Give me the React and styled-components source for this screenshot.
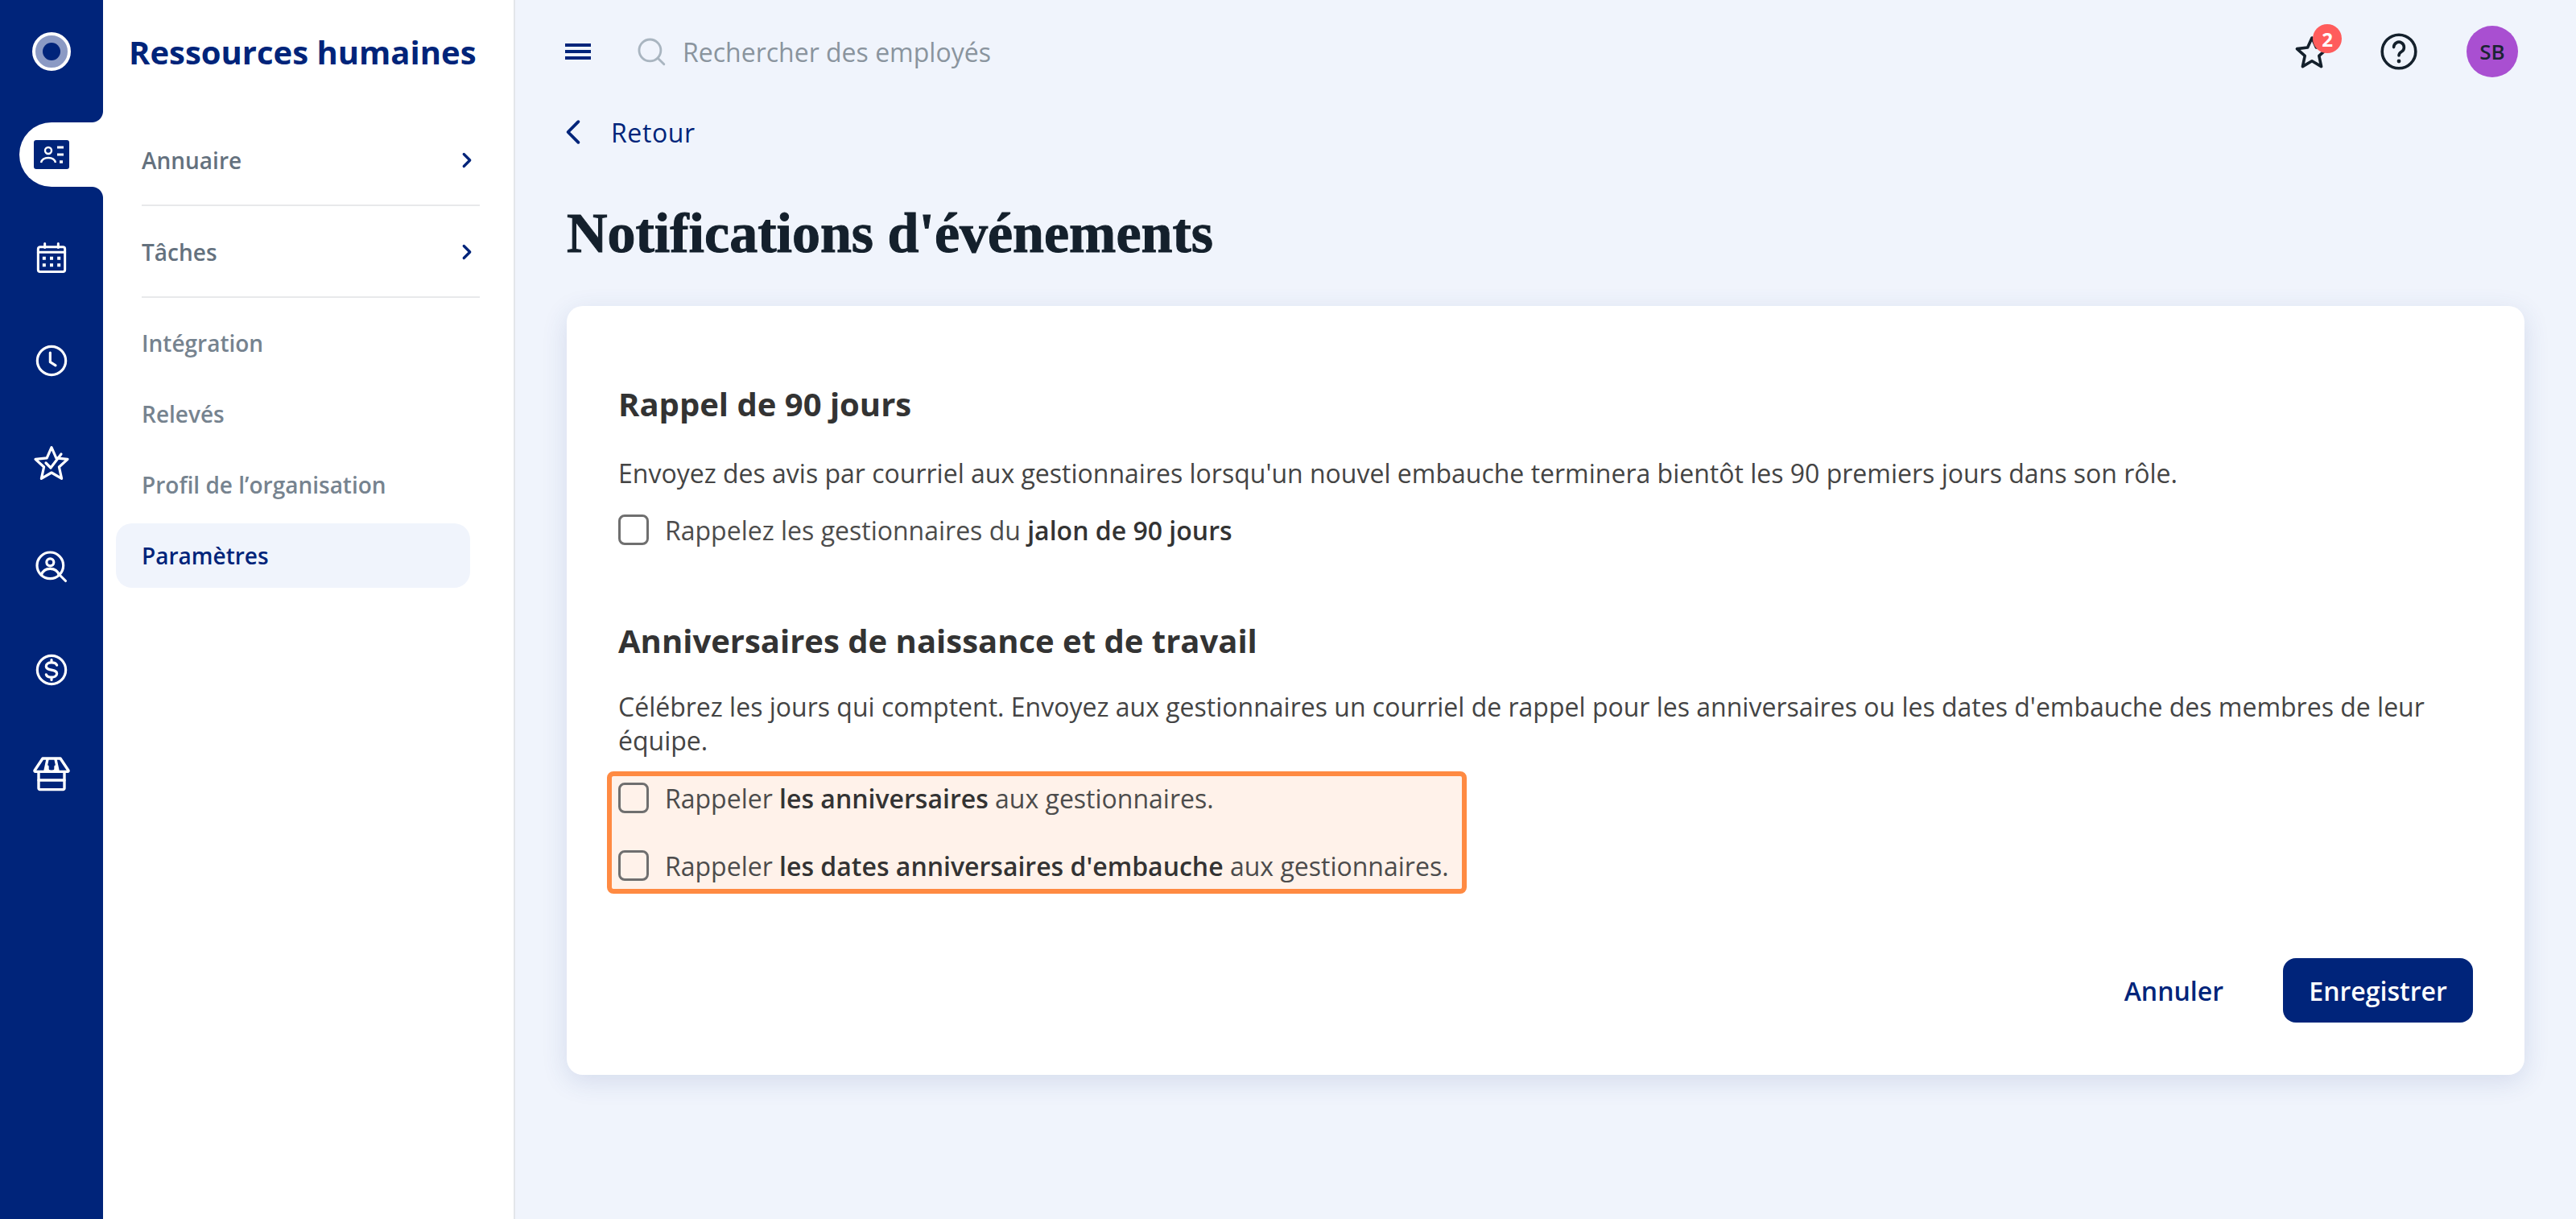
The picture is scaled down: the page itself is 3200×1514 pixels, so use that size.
import React from 'react'
import styled, { createGlobalStyle } from 'styled-components'

const NAVY = '#00247a'

const Global = createGlobalStyle`
  * { box-sizing: border-box; }
  html, body { margin: 0; padding: 0; background: #f0f4fc; }
  body { font-family: "Open Sans", "Noto Sans", sans-serif; color: #333; }
`

const Icon = ({ size = 40, height, box = '0 0 24 24', color = 'currentColor', sw = 2, children }) => (
  <svg width={size} height={height || size} viewBox={box} fill="none" stroke={color} strokeWidth={sw} strokeLinecap="round" strokeLinejoin="round">
    {children}
  </svg>
)

const railIcons = [
  <Icon key="cal" size={40} sw={1.8}>
    <rect x="2" y="4" width="20" height="18.5" rx="1.5" />
    <path d="M2 8h20M7 1.5v3M17 1.5v3" />
    <path d="M6.5 12.5h.01M12 12.5h.01M17.5 12.5h.01M6.5 17.5h.01M12 17.5h.01M17.5 17.5h.01" strokeWidth="2.4" strokeLinecap="square" />
  </Icon>,
  <Icon key="clock" size={40} sw={1.9}>
    <circle cx="12" cy="12" r="10.6" />
    <path d="M11 6v7l4 2.5" />
  </Icon>,
  <Icon key="star" size={48} sw={1.6}>
    <path d="M12 1.8l2.9 6.6 7.1.8-5.3 4.8 1.6 7.2-6.3-3.7-6.3 3.7 1.6-7.2L2 9.2l7.1-.8z" />
    <path d="M8.5 11.5l3 3 6.5-8.5" />
  </Icon>,
  <Icon key="person" size={40} sw={1.9}>
    <circle cx="11" cy="11" r="9.8" />
    <circle cx="11" cy="8.6" r="2.7" />
    <path d="M4.5 18c1-3.4 3.5-4.6 6.5-4.6s5.5 1.2 6.5 4.6M18 18l4.5 4.5" />
  </Icon>,
  <Icon key="dollar" size={40} sw={1.9}>
    <circle cx="12" cy="12" r="10.6" />
    <path d="M16 8.5c-.5-1.3-2-2-4-2-2.3 0-4 1-4 2.8 0 3.9 8 1.7 8 5.4 0 1.8-1.7 2.8-4 2.8-2 0-3.5-.7-4-2M12 4.5v2M12 17.5v2" />
  </Icon>,
  <Icon key="store" size={48} sw={1.7}>
    <path d="M4 11.5V21.5a.8.8 0 0 0 .8.8h14.4a.8.8 0 0 0 .8-.8V11.5" />
    <path d="M4 16.5h16" />
    <path d="M1.5 10.5L6.5 3h11l5 7.5a.5.5 0 0 1-.5.7H2a.5.5 0 0 1-.5-.7z" />
    <path d="M8 10.5L9.5 3.5M16 10.5L14.5 3.5M9.5 8v1.5a2.5 1.7 0 0 0 5 0V8" />
  </Icon>,
]

const App = () => (
  <>
    <Global />
    <Shell>
      <Rail>
        <RailCell>
          <Logo><LogoDot /></Logo>
        </RailCell>
        <RailTabRow>
          <RailTab>
            <svg width="44" height="36" viewBox="0 0 44 36">
              <rect width="44" height="36" rx="3" fill={NAVY} />
              <circle cx="18" cy="13" r="4" fill="none" stroke="#fff" strokeWidth="2.4" />
              <path d="M9 28c1-4 4-6 9-6s8 2 9 6" fill="none" stroke="#fff" strokeWidth="2.4" />
              <path d="M29 9h8M29 18h8" stroke="#fff" strokeWidth="3" />
              <path d="M32 27h4" stroke="#fff" strokeWidth="3.5" />
            </svg>
          </RailTab>
        </RailTabRow>
        {railIcons.map(ic => <RailCell key={ic.key}>{ic}</RailCell>)}
      </Rail>

      <Sidebar>
        <SideTitle>Ressources humaines</SideTitle>
        <ExpandRow>
          <span>Annuaire</span>
          <Icon size={16} height={20} box="0 0 12 16" color={NAVY} sw={2.6}><path d="M3 2l6 6-6 6" /></Icon>
        </ExpandRow>
        <ExpandRow>
          <span>Tâches</span>
          <Icon size={16} height={20} box="0 0 12 16" color={NAVY} sw={2.6}><path d="M3 2l6 6-6 6" /></Icon>
        </ExpandRow>
        <SideList>
          <SideLink>Intégration</SideLink>
          <SideLink>Relevés</SideLink>
          <SideLink>Profil de l’organisation</SideLink>
          <SideLink $active>Paramètres</SideLink>
        </SideList>
      </Sidebar>

      <Main>
        <TopBar>
          <Burger><i /><i /><i /></Burger>
          <SearchBox>
            <Icon size={38} color="#a9b5c0" sw={1.8}>
              <circle cx="11" cy="11" r="8.5" />
              <path d="M17.5 17.5L22 22" />
            </Icon>
            <span>Rechercher des employés</span>
          </SearchBox>
          <TopActions>
            <StarWrap>
              <Icon size={48} color="#14202c" sw={1.8}>
                <path d="M12 3.5l2.7 6 6.6.8-4.9 4.4 1.4 6.6L12 17.9l-5.8 3.4 1.4-6.6-4.9-4.4 6.6-.8z" />
              </Icon>
              <Badge>2</Badge>
            </StarWrap>
            <Icon size={48} color="#14202c" sw={1.8}>
              <circle cx="12" cy="12" r="10.4" />
              <path d="M8.8 9.3a3.2 3.2 0 1 1 4.8 2.8c-1 .6-1.6 1.2-1.6 2.4" />
              <path d="M12 18h.01" strokeWidth="2.4" />
            </Icon>
            <Avatar>SB</Avatar>
          </TopActions>
        </TopBar>

        <BackLink>
          <Icon size={20} height={32} box="0 0 12 20" color={NAVY} sw={2.4}><path d="M10 2l-8 8 8 8" /></Icon>
          <span>Retour</span>
        </BackLink>

        <PageTitle>Notifications d'événements</PageTitle>

        <Card>
          <SectionTitle>Rappel de 90 jours</SectionTitle>
          <Para>Envoyez des avis par courriel aux gestionnaires lorsqu'un nouvel embauche terminera bientôt les 90 premiers jours dans son rôle.</Para>
          <CheckRow>
            <Box />
            <span>Rappelez les gestionnaires du <b>jalon de 90 jours</b></span>
          </CheckRow>

          <SectionTitle $second>Anniversaires de naissance et de travail</SectionTitle>
          <Para>Célébrez les jours qui comptent. Envoyez aux gestionnaires un courriel de rappel pour les anniversaires ou les dates d'embauche des membres de leur équipe.</Para>
          <Highlight>
            <CheckRow>
              <Box />
              <span>Rappeler <b>les anniversaires</b> aux gestionnaires.</span>
            </CheckRow>
            <CheckRow>
              <Box />
              <span>Rappeler <b>les dates anniversaires d'embauche</b> aux gestionnaires.</span>
            </CheckRow>
          </Highlight>

          <Footer>
            <CancelBtn>Annuler</CancelBtn>
            <SaveBtn>Enregistrer</SaveBtn>
          </Footer>
        </Card>
      </Main>
    </Shell>
  </>
)

export default App

const Shell = styled.div`
  display: flex;
  min-height: 1514px;
`

const Rail = styled.nav`
  width: 128px;
  flex-shrink: 0;
  background: ${NAVY};
  color: #fff;
  display: flex;
  flex-direction: column;
`

const RailCell = styled.div`
  height: 128px;
  display: flex;
  align-items: center;
  justify-content: center;
`

const RailTabRow = styled(RailCell)`
  justify-content: flex-end;
`

const RailTab = styled.div`
  position: relative;
  width: 104px;
  height: 80px;
  background: #fff;
  border-radius: 40px 0 0 40px;
  display: flex;
  align-items: center;
  padding-left: 18px;
  &::before, &::after {
    content: '';
    position: absolute;
    right: 0;
    width: 14px;
    height: 14px;
  }
  &::before {
    top: -14px;
    background: radial-gradient(circle at 0 0, ${NAVY} 13.5px, #fff 14.5px);
  }
  &::after {
    bottom: -14px;
    background: radial-gradient(circle at 0 100%, ${NAVY} 13.5px, #fff 14.5px);
  }
`

const Logo = styled.div`
  width: 48px;
  height: 48px;
  border-radius: 50%;
  background: #8b9ac4;
  border: 4px solid #fff;
  display: flex;
  align-items: center;
  justify-content: center;
`

const LogoDot = styled.div`
  width: 22px;
  height: 22px;
  border-radius: 50%;
  background: ${NAVY};
`

const Sidebar = styled.aside`
  width: 512px;
  flex-shrink: 0;
  background: #fff;
  border-right: 2px solid #e3e6ea;
  padding: 0 0 0 16px;
`

const SideTitle = styled.h2`
  margin: 0;
  height: 142px;
  padding: 42px 0 0 16px;
  font-size: 40px;
  line-height: 46px;
  font-weight: 700;
  color: ${NAVY};
  white-space: nowrap;
`

const ExpandRow = styled.div`
  width: 420px;
  height: 114px;
  margin-left: 32px;
  padding: 2px 8px 0 0;
  border-bottom: 2px solid #e8e9eb;
  display: flex;
  align-items: center;
  justify-content: space-between;
  font-size: 28px;
  font-weight: 600;
  color: #64717e;
`

const SideList = styled.div`
  display: flex;
  flex-direction: column;
  gap: 8px;
  margin-top: 16px;
`

const SideLink = styled.div`
  width: 440px;
  height: 80px;
  padding-left: 32px;
  display: flex;
  align-items: center;
  border-radius: 20px;
  font-size: 28px;
  font-weight: 600;
  color: ${p => (p.$active ? NAVY : '#76838f')};
  background: ${p => (p.$active ? '#f0f4fc' : 'transparent')};
`

const Main = styled.main`
  flex: 1;
  min-width: 0;
  padding: 0 64px 0 62px;
`

const TopBar = styled.header`
  height: 128px;
  display: flex;
  align-items: center;
`

const Burger = styled.div`
  width: 32px;
  display: flex;
  flex-direction: column;
  gap: 4px;
  margin-right: 56px;
  i {
    display: block;
    height: 4px;
    background: ${NAVY};
  }
`

const SearchBox = styled.div`
  display: flex;
  align-items: center;
  gap: 20px;
  font-size: 32px;
  color: #8a949e;
`

const TopActions = styled.div`
  margin-left: auto;
  display: flex;
  align-items: center;
  gap: 60px;
  padding-right: 8px;
`

const StarWrap = styled.div`
  position: relative;
  width: 48px;
  height: 48px;
`

const Badge = styled.span`
  position: absolute;
  top: -10px;
  left: 25px;
  width: 36px;
  height: 36px;
  border-radius: 50%;
  background: #ff5c5c;
  color: #fff;
  font-size: 24px;
  font-weight: 700;
  display: flex;
  align-items: center;
  justify-content: center;
`

const Avatar = styled.div`
  width: 64px;
  height: 64px;
  border-radius: 50%;
  background: #a94fd1;
  color: #1b2533;
  font-size: 26px;
  font-weight: 600;
  display: flex;
  align-items: center;
  justify-content: center;
`

const BackLink = styled.div`
  display: flex;
  align-items: center;
  gap: 37px;
  height: 72px;
  font-size: 32px;
  font-weight: 500;
  letter-spacing: 0.6px;
  color: ${NAVY};
`

const PageTitle = styled.h1`
  margin: 44px 0 0 2px;
  height: 136px;
  font-family: "Liberation Serif", serif;
  font-size: 70px;
  line-height: 92px;
  font-weight: 700;
  color: #14202c;
  -webkit-text-stroke: 1px #14202c;
`

const Card = styled.section`
  margin-left: 2px;
  height: 955px;
  background: #fff;
  border-radius: 20px;
  padding: 94px 64px 0 64px;
  box-shadow: 0 8px 32px rgba(40, 70, 140, 0.14);
  display: flex;
  flex-direction: column;
`

const SectionTitle = styled.h3`
  margin: ${p => (p.$second ? '85px 0 0' : '0 0 4px')};
  font-size: 40px;
  line-height: 56px;
  font-weight: 700;
  color: #333;
`

const Para = styled.p`
  margin: 33px 0 0;
  font-size: 32px;
  line-height: 42px;
  color: #444;
`

const CheckRow = styled.label`
  display: flex;
  align-items: center;
  gap: 20px;
  height: 50px;
  margin-top: 24px;
  font-size: 32px;
  color: #4c4c4c;
  white-space: nowrap;
  b {
    font-weight: 600;
    color: #333;
  }
`

const Box = styled.span`
  width: 38px;
  height: 38px;
  flex-shrink: 0;
  border: 3px solid #6f6f6f;
  border-radius: 8px;
`

const Highlight = styled.div`
  width: 1068px;
  height: 152px;
  margin: 17px 0 0 -14px;
  padding: 2px 8px 4px;
  background: #fff2ea;
  border: 6px solid #ff8a42;
  border-radius: 8px;
  display: flex;
  flex-direction: column;
  justify-content: space-between;
  ${CheckRow} {
    margin-top: 0;
  }
`

const Footer = styled.div`
  display: flex;
  justify-content: flex-end;
  align-items: center;
  gap: 74px;
  margin-top: 80px;
`

const CancelBtn = styled.button`
  border: 0;
  padding: 0;
  background: none;
  font: 600 32px "Open Sans", sans-serif;
  color: ${NAVY};
`

const SaveBtn = styled.button`
  width: 236px;
  height: 80px;
  border: 0;
  border-radius: 16px;
  background: ${NAVY};
  color: #fff;
  font: 600 32px "Open Sans", sans-serif;
`
